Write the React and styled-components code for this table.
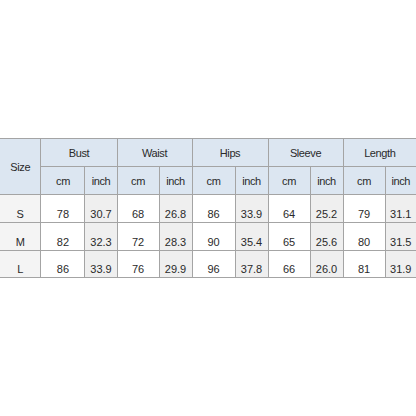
import React from "react";
import styled, { createGlobalStyle } from "styled-components";

const GlobalStyle = createGlobalStyle`
  html, body {
    margin: 0;
    padding: 0;
    background: #fff;
  }
`;

const Page = styled.div`
  width: 416px;
  height: 416px;
  display: flex;
  align-items: center;
  justify-content: center;
  font-family: "Liberation Sans", Arial, sans-serif;
`;

const Table = styled.table`
  width: 416px;
  border-collapse: collapse;
  table-layout: fixed;
  font-size: 11px;
  line-height: 12px;
  color: #2a2a2a;

  td, th {
    border: 1px solid #a4a4a4;
    padding: 0;
    text-align: center;
    font-weight: normal;
  }
  tr > :first-child { border-left: none; }
  tr > :last-child { border-right: none; }
`;

const Row = styled.tr`
  height: ${(p) => p.$h}px;
`;

const Head = styled.th`
  background: #dce6f1;
  vertical-align: middle;
  letter-spacing: -0.4px;
`;

const Cell = styled.td`
  vertical-align: bottom;
  padding-bottom: 2px !important;
  background: ${(p) => (p.$shade ? "#efefef" : p.$size ? "#f4f4f4" : "#fff")};
`;

const widths = [41, 44, 32, 42, 33, 43, 33, 42, 33, 42, 31];
const groups = ["Bust", "Waist", "Hips", "Sleeve", "Length"];
const rows = [
  ["S", "78", "30.7", "68", "26.8", "86", "33.9", "64", "25.2", "79", "31.1"],
  ["M", "82", "32.3", "72", "28.3", "90", "35.4", "65", "25.6", "80", "31.5"],
  ["L", "86", "33.9", "76", "29.9", "96", "37.8", "66", "26.0", "81", "31.9"],
];

export default function App() {
  return (
    <Page>
      <GlobalStyle />
      <Table>
        <colgroup>
          {widths.map((w, i) => (
            <col key={i} style={{ width: w }} />
          ))}
        </colgroup>
        <thead>
          <Row $h={28}>
            <Head rowSpan={2}>Size</Head>
            {groups.map((g) => (
              <Head key={g} colSpan={2}>{g}</Head>
            ))}
          </Row>
          <Row $h={28}>
            {groups.map((g) => (
              <React.Fragment key={g}>
                <Head>cm</Head>
                <Head>inch</Head>
              </React.Fragment>
            ))}
          </Row>
        </thead>
        <tbody>
          {rows.map((r, ri) => (
            <Row key={r[0]} $h={ri === 2 ? 27 : 28}>
              {r.map((v, i) => (
                <Cell key={i} $size={i === 0} $shade={i > 0 && i % 2 === 0}>
                  {v}
                </Cell>
              ))}
            </Row>
          ))}
        </tbody>
      </Table>
    </Page>
  );
}
